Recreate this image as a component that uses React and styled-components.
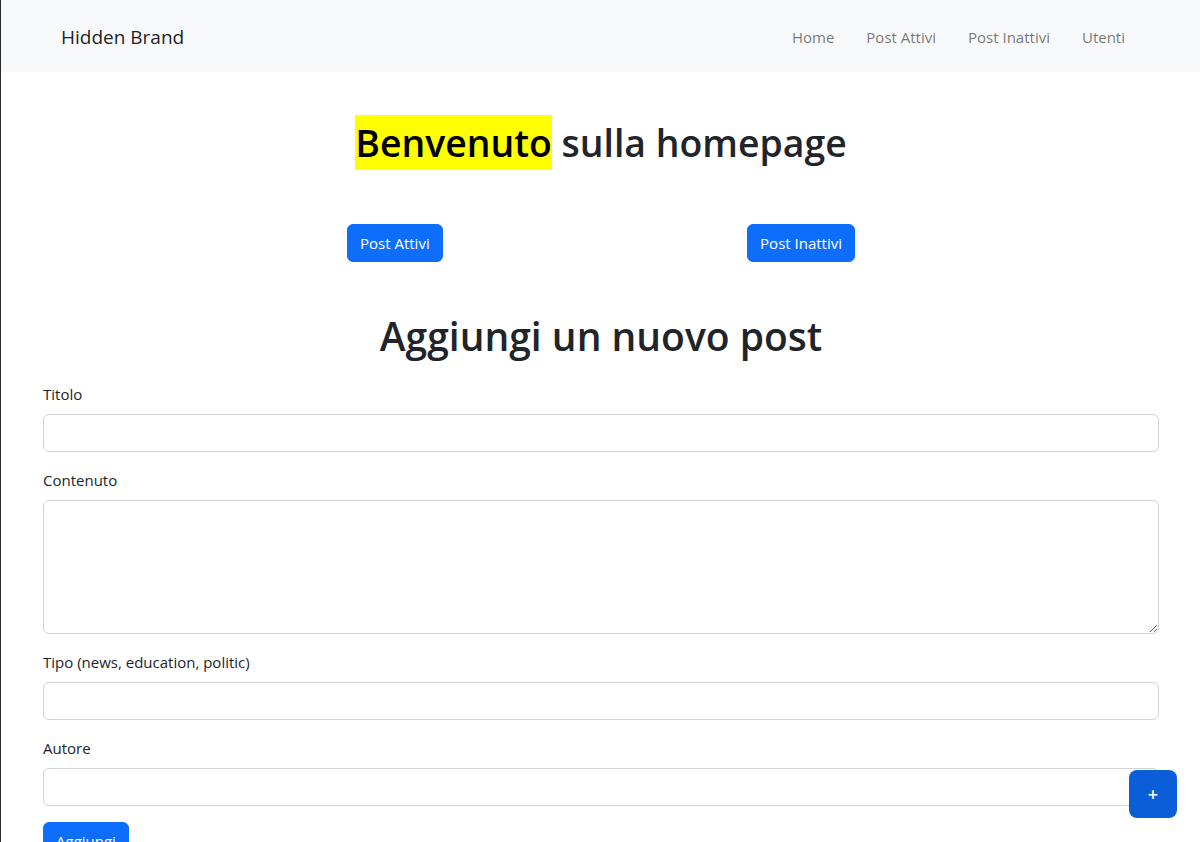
import React from 'react';
import styled, { createGlobalStyle } from 'styled-components';

const GlobalStyle = createGlobalStyle`
  * { box-sizing: border-box; }
  body {
    margin: 0;
    font-family: "Open Sans", "Noto Sans", sans-serif;
    font-size: 15px;
    line-height: 24px;
    color: #212529;
    background: #fff;
    border-left: 1px solid #2b2b2b;
  }
`;

const Navbar = styled.nav`
  height: 72px;
  background: #f8f9fa;
  display: flex;
  align-items: center;
  justify-content: space-between;
  padding: 2px 59px 0 60px;
`;

const Brand = styled.a`
  font-size: 19px;
  color: rgba(0, 0, 0, 0.9);
  text-decoration: none;
`;

const NavLinks = styled.div`
  display: flex;
`;

const NavLink = styled.a`
  padding: 0 16px;
  color: rgba(0, 0, 0, 0.55);
  text-decoration: none;
`;

const Container = styled.main`
  padding: 0 41px 40px 42px;
`;

const Title = styled.h1`
  margin: 0;
  font-size: ${p => p.$size || 37}px;
  font-weight: 600;
  line-height: 48px;
  text-align: center;
`;

const Hero = styled(Title)`
  margin-top: 47px;
`;

const Highlight = styled.span`
  background: #ffff00;
  color: #000;
  padding: 2px 0;
`;

const ButtonRow = styled.div`
  width: 508px;
  margin: 57px auto 0;
  display: flex;
  justify-content: space-between;
`;

const Button = styled.button`
  font-family: inherit;
  font-size: 15px;
  line-height: 24px;
  padding: 6px 12px;
  border: 1px solid #0d6efd;
  border-radius: 6px;
  background: #0d6efd;
  color: #fff;
  cursor: pointer;
`;

const FormTitle = styled(Title)`
  margin-top: 50px;
  margin-bottom: 22px;
`;

const Field = styled.div`
  margin-bottom: 16px;
`;

const Label = styled.label`
  display: block;
  margin-bottom: 8px;
`;

const Input = styled.input`
  display: block;
  width: 100%;
  height: 38px;
  padding: 6px 12px;
  font-family: inherit;
  font-size: 15px;
  border: 1px solid #ced4da;
  border-radius: 6px;
  outline: none;
`;

const TextArea = styled.textarea`
  display: block;
  width: 100%;
  height: 134px;
  padding: 6px 12px;
  font-family: inherit;
  font-size: 15px;
  border: 1px solid #ced4da;
  border-radius: 6px;
  outline: none;
`;

const Fab = styled.button`
  position: fixed;
  right: 23px;
  bottom: 24px;
  width: 48px;
  height: 48px;
  border: none;
  border-radius: 8px;
  background: #0b5ed7;
  color: #fff;
  font-family: inherit;
  font-size: 18px;
  font-weight: 600;
  cursor: pointer;
`;

const fields = [
  { id: 'titolo', label: 'Titolo' },
  { id: 'contenuto', label: 'Contenuto', area: true },
  { id: 'tipo', label: 'Tipo (news, education, politic)' },
  { id: 'autore', label: 'Autore' },
];

export default function App() {
  return (
    <>
      <GlobalStyle />
      <Navbar>
        <Brand href="#">Hidden Brand</Brand>
        <NavLinks>
          <NavLink href="#">Home</NavLink>
          <NavLink href="#">Post Attivi</NavLink>
          <NavLink href="#">Post Inattivi</NavLink>
          <NavLink href="#">Utenti</NavLink>
        </NavLinks>
      </Navbar>
      <Container>
        <Hero $size={37.4}>
          <Highlight>Benvenuto</Highlight> sulla homepage
        </Hero>
        <ButtonRow>
          <Button>Post Attivi</Button>
          <Button>Post Inattivi</Button>
        </ButtonRow>
        <FormTitle $size={39}>Aggiungi un nuovo post</FormTitle>
        <form onSubmit={e => e.preventDefault()}>
          {fields.map(f => (
            <Field key={f.id}>
              <Label htmlFor={f.id}>{f.label}</Label>
              {f.area ? <TextArea id={f.id} /> : <Input id={f.id} />}
            </Field>
          ))}
          <Button type="submit">Aggiungi</Button>
        </form>
      </Container>
      <Fab>+</Fab>
    </>
  );
}
